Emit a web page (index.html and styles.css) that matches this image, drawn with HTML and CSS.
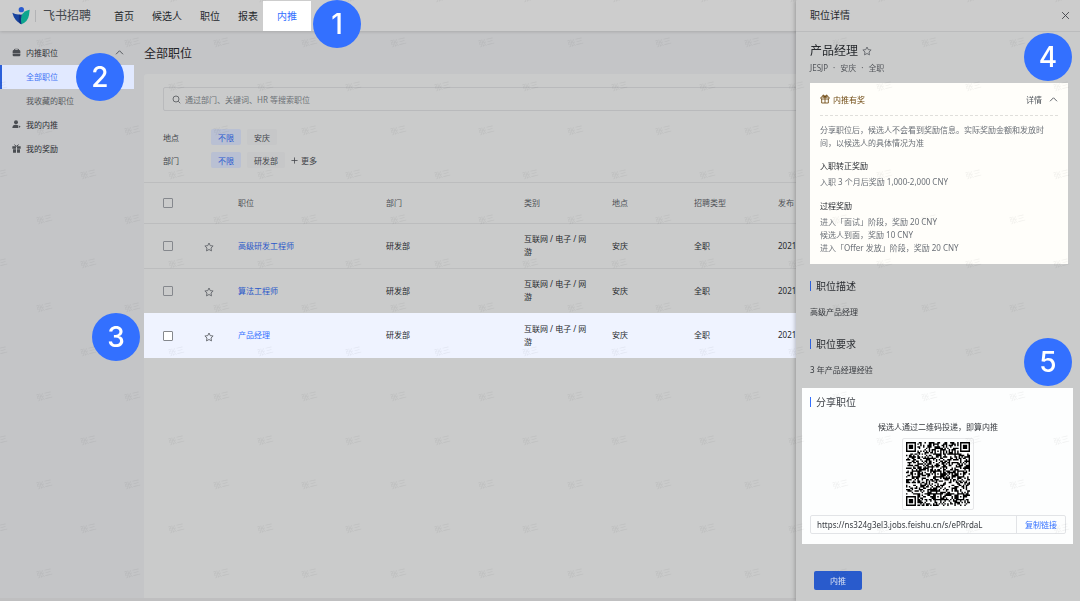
FILE: index.html
```html
<!DOCTYPE html>
<html lang="zh-CN">
<head>
<meta charset="utf-8">
<meta name="viewport" content="width=device-width, initial-scale=1">
<title>飞书招聘</title>
<link rel="stylesheet" href="styles.css">
</head>
<body>
<svg class="sprite" aria-hidden="true">
  <symbol id="star" viewBox="0 0 18 18"><path d="M9 1.8l2.2 4.7 5.2.7-3.8 3.6.9 5.2L9 13.500l-4.500 2.500.9-5.200L1.600 7.200l5.200-.7z" fill="none" stroke="currentColor" stroke-width="1.700" stroke-linejoin="round"/></symbol>
  <symbol id="up" viewBox="0 0 18 10"><path d="M2 8.500l7-7 7 7" fill="none" stroke="currentColor" stroke-width="1.800"/></symbol>
</svg>

<div class="page">
  <header class="topbar">
    <div class="brand">
      <svg class="brand-logo" viewBox="0 0 54 54" aria-hidden="true">
        <circle cx="28" cy="8" r="8" fill="#2a5bd0"/>
        <path d="M1 17q10 6 21 5l8 8-1 22Q7 42 1 17z" fill="#17439f"/>
        <path d="M53 8q-17 3-24 16-4 9-1 28 20-8 23-28z" fill="#0da58e"/>
        <path d="M21 24q5-2 9-1-5 10-2 29-5-2-8-8z" fill="#103080"/>
      </svg>
      <span class="brand-name">飞书招聘</span>
    </div>
    <nav class="tabs">
      <a href="#">首页</a>
      <a href="#">候选人</a>
      <a href="#">职位</a>
      <a href="#">报表</a>
      <a href="#" class="active" aria-current="page">内推</a>
    </nav>
  </header>

  <div class="layout">
    <aside class="sidebar">
      <a href="#" class="side-item">
        <svg viewBox="0 0 27 27" aria-hidden="true"><path d="M6 6q0-4 4-4h7q4 0 4 4 4 0 4 4v5H2v-5q0-4 4-4zm3 0h9q0-2-2-2h-5q-2 0-2 2z" fill="currentColor" fill-rule="evenodd"/><path d="M2 16.500h23V22q0 3-3 3H5q-3 0-3-3z" fill="currentColor"/></svg>
        <span>内推职位</span>
        <svg class="caret" aria-hidden="true"><use href="#up"/></svg>
      </a>
      <a href="#" class="side-item sub active">全部职位</a>
      <a href="#" class="side-item sub">我收藏的职位</a>
      <a href="#" class="side-item">
        <svg viewBox="0 0 27 27" aria-hidden="true"><circle cx="12" cy="7" r="6" fill="currentColor"/><path d="M1 24q0-10 10-10 5 0 7 2v8zM20 16l6 4-6 4z" fill="currentColor"/></svg>
        <span>我的内推</span>
      </a>
      <a href="#" class="side-item">
        <svg viewBox="0 0 27 27" aria-hidden="true"><path d="M1 7h11v7H1zM15 7h11v7H15zM3 16h9v10H3zM15 16h9v10h-9z" fill="currentColor"/><path d="M7 2l6 5 7-5" fill="none" stroke="currentColor" stroke-width="3"/></svg>
        <span>我的奖励</span>
      </a>
    </aside>

    <main class="content">
      <h1>全部职位</h1>
      <section class="panel">
        <div class="filters">
          <label class="search">
            <svg viewBox="0 0 18 18" aria-hidden="true"><circle cx="8" cy="8" r="6" fill="none" stroke="currentColor" stroke-width="1.600"/><path d="M12.500 12.500L16.500 16.500" stroke="currentColor" stroke-width="1.600"/></svg>
            <input type="search" aria-label="搜索职位" placeholder="通过部门、关键词、HR 等搜索职位">
          </label>
          <div class="filter">
            <span class="filter-name">地点</span>
            <button class="chip on" type="button">不限</button>
            <button class="chip" type="button">安庆</button>
          </div>
          <div class="filter">
            <span class="filter-name">部门</span>
            <button class="chip on" type="button">不限</button>
            <button class="chip" type="button">研发部</button>
            <button class="more" type="button"><svg viewBox="0 0 16 16" aria-hidden="true"><path d="M8 1v14M1 8h14" stroke="currentColor" stroke-width="1.800"/></svg>更多</button>
          </div>
        </div>
        <table class="jobs">
          <colgroup><col class="c-check"><col class="c-star"><col class="c-title"><col class="c-dept"><col class="c-cat"><col class="c-place"><col class="c-type"><col></colgroup>
          <thead>
            <tr><th><input type="checkbox" aria-label="全选"></th><th></th><th>职位</th><th>部门</th><th>类别</th><th>地点</th><th>招聘类型</th><th>发布</th></tr>
          </thead>
          <tbody>
            <tr>
              <td><input type="checkbox" aria-label="选择高级研发工程师"></td>
              <td><button class="star" type="button" aria-label="收藏"><svg><use href="#star"/></svg></button></td>
              <td><a href="#">高级研发工程师</a></td><td>研发部</td><td>互联网 / 电子 / 网游</td><td>安庆</td><td>全职</td><td>2021</td>
            </tr>
            <tr>
              <td><input type="checkbox" aria-label="选择算法工程师"></td>
              <td><button class="star" type="button" aria-label="收藏"><svg><use href="#star"/></svg></button></td>
              <td><a href="#">算法工程师</a></td><td>研发部</td><td>互联网 / 电子 / 网游</td><td>安庆</td><td>全职</td><td>2021</td>
            </tr>
            <tr class="current">
              <td><input type="checkbox" aria-label="选择产品经理"></td>
              <td><button class="star" type="button" aria-label="收藏"><svg><use href="#star"/></svg></button></td>
              <td><a href="#">产品经理</a></td><td>研发部</td><td>互联网 / 电子 / 网游</td><td>安庆</td><td>全职</td><td>2021</td>
            </tr>
          </tbody>
        </table>
      </section>
    </main>
  </div>
</div>

<aside class="drawer">
  <header class="drawer-head">
    <h2>职位详情</h2>
    <button class="close" type="button" aria-label="关闭"><svg viewBox="0 0 16 16"><path d="M2 2l12 12M14 2L2 14" stroke="currentColor" stroke-width="1.600"/></svg></button>
  </header>
  <div class="drawer-body">
    <div class="job-head">
      <div class="job-name"><h3>产品经理</h3><button class="star" type="button" aria-label="收藏"><svg><use href="#star"/></svg></button></div>
      <p class="job-meta"><span>JESJP</span><span>·</span><span>安庆</span><span>·</span><span>全职</span></p>
    </div>
    <section class="reward">
      <div class="reward-head">
        <svg viewBox="0 0 30 30" aria-hidden="true"><path d="M3 9h24v6H3zM5 15v12h20V15M15 9v18M10 3l5 6 5-6M8 5q0-3 3-2l4 6H9zM22 5q0-3-3-2l-4 6h6z" fill="none" stroke="currentColor" stroke-width="2.600"/></svg>
        <h4>内推有奖</h4>
        <button class="toggle" type="button">详情<svg aria-hidden="true"><use href="#up"/></svg></button>
      </div>
      <p class="note">分享职位后，候选人不会看到奖励信息。实际奖励金额和发放时间，以候选人的具体情况为准</p>
      <h5>入职转正奖励</h5>
      <p>入职 3 个月后奖励 1,000-2,000 CNY</p>
      <h5>过程奖励</h5>
      <p>进入「面试」阶段，奖励 20 CNY</p>
      <p>候选人到面，奖励 10 CNY</p>
      <p>进入「Offer 发放」阶段，奖励 20 CNY</p>
    </section>
    <section class="block">
      <h4>职位描述</h4>
      <p>高级产品经理</p>
    </section>
    <section class="block">
      <h4>职位要求</h4>
      <p>3 年产品经理经验</p>
    </section>
    <section class="block share">
      <h4>分享职位</h4>
      <p class="share-tip">候选人通过二维码投递，即算内推</p>
      <div class="qr"><svg id="qr" viewBox="0 0 45 45" role="img" aria-label="职位二维码"></svg></div>
      <div class="link">
        <input type="text" readonly aria-label="职位链接" value="https://ns324g3el3.jobs.feishu.cn/s/ePRrdaL">
        <button type="button">复制链接</button>
      </div>
    </section>
  </div>
  <footer class="drawer-foot"><button class="primary" type="button">内推</button></footer>
</aside>

<svg class="watermark" aria-hidden="true">
  <defs>
    <pattern id="mark" width="177" height="177" patternUnits="userSpaceOnUse">
      <g class="mark-text">
        <text transform="translate(45 45) rotate(-14)">张三</text>
        <text transform="translate(133 45) rotate(-14)">张三</text>
        <text transform="translate(89 89) rotate(-14)">张三</text>
        <text transform="translate(0 89) rotate(-14)">张三</text>
        <text transform="translate(177 89) rotate(-14)">张三</text>
        <text transform="translate(45 133) rotate(-14)">张三</text>
        <text transform="translate(133 133) rotate(-14)">张三</text>
        <text transform="translate(89 0) rotate(-14)">张三</text>
        <text transform="translate(89 177) rotate(-14)">张三</text>
        <text transform="translate(0 0) rotate(-14)">张三</text>
        <text transform="translate(177 0) rotate(-14)">张三</text>
        <text transform="translate(0 177) rotate(-14)">张三</text>
        <text transform="translate(177 177) rotate(-14)">张三</text>
      </g>
    </pattern>
  </defs>
  <rect width="100%" height="100%" fill="url(#mark)"/>
</svg>

<span class="step step-1">1</span>
<span class="step step-2">2</span>
<span class="step step-3">3</span>
<span class="step step-4">4</span>
<span class="step step-5">5</span>
<script src="qr.js"></script>
</body>
</html>
```

FILE: styles.css
```css
* { box-sizing: border-box; }
body, h1, h2, h3, h4, h5, p { margin: 0; font-weight: 400; }
body {
  font-family: "Noto Sans", "Noto Sans CJK SC", sans-serif;
  font-size: 8px;
  line-height: 13px;
  color: #26292e;
  background: #c4c5c7;
  overflow: hidden;
}
a { color: inherit; text-decoration: none; }
button, input { font: inherit; color: inherit; margin: 0; padding: 0; border: 0; background: none; }
button { cursor: pointer; }
svg { display: block; flex: none; }
.sprite { position: absolute; width: 0; height: 0; }

.page { display: flex; flex-direction: column; min-height: 100vh; border-bottom: 3px solid #bfbfc0; }

/* Top bar */
.topbar {
  display: flex;
  height: 31px;
  padding-left: 12px;
  background: #cdcdcd;
  box-shadow: 0 1px 3px rgba(0, 0, 0, 0.14);
  z-index: 1;
}
.brand { display: flex; align-items: center; margin-right: 14px; }
.brand-logo { width: 18px; height: 18px; margin-right: 5px; }
.brand-name { padding-left: 7px; border-left: 1px solid #b2b3b5; font-size: 12px; line-height: 12px; color: #43474d; }
.tabs { display: flex; padding-top: 1px; font-size: 10px; }
.tabs a { display: flex; align-items: center; padding: 0 9px; color: #24272b; }
.tabs .active { margin-left: -4px; padding: 0 14px; background: #fff; color: #3370ff; }

/* Sidebar */
.layout { display: flex; flex: 1; }
.sidebar { flex: 0 0 134px; padding-top: 10px; }
.side-item { display: flex; align-items: center; height: 24px; padding: 0 10px 1px 12px; color: #2c2f34; }
.side-item svg { width: 9px; height: 9px; margin-right: 5px; color: #4a4d52; }
.side-item .caret { width: 9px; height: 5px; margin: 0 0 0 auto; }
.sub { padding-left: 26px; color: #54575c; }
.sub.active { padding-left: 24px; border-left: 2px solid #2b5fd9; background: #e1e9ff; color: #3f72f5; }

/* Job list */
.content { flex: 1; min-width: 0; display: flex; flex-direction: column; padding-left: 10px; }
h1 { padding: 15px 0 12px; font-size: 12px; line-height: 16px; color: #1f2226; }
.panel { flex: 1; background: #cacbcb; border-radius: 3px 3px 0 0; }
.filters { display: flex; flex-direction: column; gap: 7px; padding: 13px 19px 14px; }
.search { display: flex; align-items: center; gap: 4px; height: 24px; margin-bottom: 11px; padding-left: 8px; border: 1px solid #b9babc; border-radius: 2px; color: #505358; }
.search svg { width: 9px; height: 9px; }
.search input { flex: 1; outline: 0; }
.search input::placeholder { color: #6d7176; opacity: 1; }
.filter { display: flex; align-items: center; gap: 6px; height: 16px; color: #42454a; }
.filter-name { width: 42px; }
.chip { height: 16px; padding: 0 7px; border-radius: 2px; background: #c6c7c8; color: #42454a; }
.chip.on { background: #b9c0d3; color: #2b5ad0; }
.more { display: flex; align-items: center; gap: 3px; color: #42454a; }
.more svg { width: 7px; height: 7px; }

.jobs { width: 100%; table-layout: fixed; border-collapse: collapse; }
.c-check { width: 60px; }
.c-star { width: 34px; }
.c-title { width: 148px; }
.c-dept { width: 138px; }
.c-cat { width: 88px; }
.c-place { width: 82px; }
.c-type { width: 84px; }
.jobs th, .jobs td { padding: 0 20px 2px 0; text-align: left; vertical-align: middle; border-top: 1px solid #bcbdbe; }
.jobs th { height: 41px; font-weight: 400; color: #4d5055; }
.jobs td { height: 45px; color: #25282c; }
.jobs th:first-child, .jobs td:first-child { padding: 0 0 0 19px; }
.jobs td:nth-child(2) { padding: 2px 0 0; }
.jobs td a { color: #2a58c9; }
.jobs input { appearance: none; display: block; width: 10px; height: 10px; border: 1px solid #85888d; border-radius: 1px; }
.jobs .current { background: #eff3ff; }
.jobs .current td { height: 44px; border-top-color: #eff3ff; }
.jobs .current a { color: #3370ff; }
.jobs .current input { background: #fff; }
.star { display: block; color: #66696e; }
.star svg { width: 10px; height: 10px; }

/* Detail drawer */
.drawer {
  position: fixed;
  top: 0;
  right: 0;
  bottom: 0;
  width: 284px;
  display: flex;
  flex-direction: column;
  background: #cacbcb;
  box-shadow: -1px 0 4px rgba(0, 0, 0, 0.25);
  z-index: 2;
}
.drawer-head { display: flex; align-items: center; justify-content: space-between; height: 32px; padding: 0 10px 0 14px; border-bottom: 1px solid #bbbcbd; background: #cccccc; }
.drawer-head h2 { font-size: 10px; color: #26292d; }
.close svg { width: 9px; height: 9px; color: #3e4146; }
.drawer-body { flex: 1; padding: 10px 7px 0 6px; }
.job-head { padding: 0 8px 8px; }
.job-name { display: flex; align-items: center; gap: 4px; }
.job-name h3 { font-size: 12px; line-height: 18px; color: #26292d; }
.job-meta { display: flex; gap: 5px; line-height: 15px; color: #54575c; }

.reward { margin: 0 5px 16px 8px; padding: 0 10px 10px; background: #fffefa; color: #6b7077; }
.reward-head { display: flex; align-items: center; height: 33px; margin-bottom: 7px; border-bottom: 1px dashed #e0dfdb; color: #704a12; }
.reward-head svg { width: 10px; height: 10px; }
.reward-head h4 { margin-left: 3px; }
.toggle { display: flex; align-items: center; gap: 7px; margin-left: auto; color: #4f545b; }
.toggle svg { width: 9px; height: 5px; }
.note { padding-right: 8px; }
.reward h5 { margin: 10px 0 3px; font-size: 8px; color: #25282d; }
.reward p:not(.note) + h5 { margin-top: 11px; }

.block { padding: 0 8px; margin-bottom: 20px; color: #35383d; }
.block h4 { display: flex; align-items: center; gap: 5px; margin-bottom: 13px; font-size: 10px; line-height: 12px; color: #2b2e33; }
.block h4::before { content: ""; width: 1px; height: 10px; background: #2c60dc; }
.share { margin: -8px 0 0; padding: 8px 7px 10px 8px; background: #fdfefe; }
.share h4 { margin-bottom: 12px; color: #3b3f45; }
.share h4::before { background: #3370ff; }
.share-tip { text-align: center; }
.qr { width: 72px; margin: 5px auto; padding: 3px; border: 1px solid #e6e7e9; border-radius: 2px; }
.qr svg { width: 64px; height: 64px; }
.link { display: flex; height: 19px; border: 1px solid #e2e4e7; border-radius: 2px; }
.link input { flex: 1; min-width: 0; padding-left: 6px; color: #373b41; }
.link button { width: 49px; border-left: 1px solid #e2e4e7; color: #3370ff; }
.drawer-foot { padding: 0 18px 11px; }
.primary { width: 48px; height: 19px; border-radius: 2px; background: #295bcc; color: #dce3f3; }

/* Overlays */
.watermark { position: fixed; inset: 0; width: 100%; height: 100%; z-index: 3; pointer-events: none; }
.mark-text { font-size: 8px; fill: #000; fill-opacity: 0.06; text-anchor: middle; }
.step {
  position: absolute;
  display: grid;
  place-items: center;
  width: 48px;
  height: 48px;
  border-radius: 50%;
  background: #3370ff;
  color: #fff;
  font: 500 28px/28px Inter, "Liberation Sans", sans-serif;
  z-index: 4;
}
.step-1 { left: 313px; top: 0; }
.step-2 { left: 76px; top: 53px; }
.step-3 { left: 92px; top: 313px; }
.step-4 { right: 8px; top: 33px; }
.step-5 { right: 8px; top: 338px; }
```

FILE: qr.js
```js
// Draws a 45-module code: finder, alignment and timing patterns around the data area.
(function () {
  var n = 45, seed = 20213;
  function next() { seed = (seed * 1103515245 + 12345) % 2147483648; return seed / 2147483648; }
  var grid = [];
  for (var y = 0; y < n; y++) {
    grid.push([]);
    for (var x = 0; x < n; x++) grid[y].push(next() < 0.5);
  }
  for (var t = 0; t < n; t++) grid[6][t] = grid[t][6] = t % 2 === 0;
  function rings(cx, cy, r, dark) {
    for (var dy = -r; dy <= r; dy++) for (var dx = -r; dx <= r; dx++) {
      var px = cx + dx, py = cy + dy;
      if (px < 0 || py < 0 || px >= n || py >= n) continue;
      grid[py][px] = dark.indexOf(Math.max(Math.abs(dx), Math.abs(dy))) >= 0;
    }
  }
  [[3, 3], [41, 3], [3, 41]].forEach(function (p) { rings(p[0], p[1], 4, [0, 1, 3]); });
  [[22, 6], [6, 22], [22, 22], [38, 22], [22, 38], [38, 38]].forEach(function (p) { rings(p[0], p[1], 2, [0, 2]); });
  var d = "";
  grid.forEach(function (row, y) {
    row.forEach(function (on, x) { if (on) d += "M" + x + " " + y + "h1v1h-1z"; });
  });
  var path = document.createElementNS("http://www.w3.org/2000/svg", "path");
  path.setAttribute("d", d);
  document.getElementById("qr").appendChild(path);
})();
```
